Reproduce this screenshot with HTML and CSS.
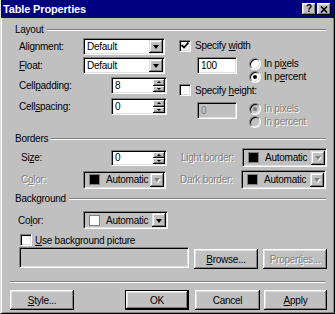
FILE: index.html
```html
<!DOCTYPE html>
<html lang="en">
<head>
  <meta charset="UTF-8">
  <title>Table Properties</title>
  <link rel="stylesheet" href="styles.css">
</head>
<body>

  <div class="dialog">
    <div class="titlebar">
      <span class="title">Table Properties</span>
      <span class="cap-btn help">?</span>
      <span class="cap-btn close">
        <svg width="8" height="7" viewBox="0 0 8 7"><path d="M1 0.5L7 6.5M7 0.5L1 6.5" stroke="#000" stroke-width="1.6"/></svg>
      </span>
    </div>

    <div class="content">
      <!-- Layout -->
      <div class="group-head"><span>Layout</span><i class="etch"></i></div>
      <div class="layout">
        <div class="col-left">
          <div class="row r1">
            <label class="lbl w64">Ali<u>g</u>nment:</label>
            <div class="field select w82"><span class="val">Default</span><span class="drop"><i class="tri"></i></span></div>
          </div>
          <div class="row r2">
            <label class="lbl w64"><u>F</u>loat:</label>
            <div class="field select w82"><span class="val">Default</span><span class="drop"><i class="tri"></i></span></div>
          </div>
          <div class="row r3">
            <label class="lbl w92">Cell<u>p</u>adding:</label>
            <div class="field spin w56"><span class="val">8</span><span class="spin-btns"><span class="sb"><i class="up"></i></span><span class="sb"><i class="dn"></i></span></span></div>
          </div>
          <div class="row r4">
            <label class="lbl w92">Cell<u>s</u>pacing:</label>
            <div class="field spin w56"><span class="val">0</span><span class="spin-btns"><span class="sb"><i class="up"></i></span><span class="sb"><i class="dn"></i></span></span></div>
          </div>
        </div>

        <div class="col-right">
          <div class="cb-row first">
            <span class="check on"><svg width="8" height="7" viewBox="0 0 8 7"><path d="M0.5 3L3 5.5L7.5 0.5" fill="none" stroke="#000" stroke-width="1.8"/></svg></span>
            <span>Specify <u>w</u>idth</span>
          </div>
          <div class="size-block">
            <div class="field text w40"><span class="val">100</span></div>
            <div class="radios">
              <div class="radio-row"><span class="radio"></span><span>In pi<u>x</u>els</span></div>
              <div class="radio-row"><span class="radio on"></span><span>In p<u>e</u>rcent</span></div>
            </div>
          </div>
          <div class="cb-row second">
            <span class="check"></span>
            <span>Specify <u>h</u>eight:</span>
          </div>
          <div class="size-block lower">
            <div class="field text w40 disabled"><span class="val">0</span></div>
            <div class="radios">
              <div class="radio-row dim"><span class="radio on disabled"></span><span>In pixels</span></div>
              <div class="radio-row dim"><span class="radio disabled"></span><span>In percent</span></div>
            </div>
          </div>
        </div>
      </div>

      <!-- Borders -->
      <div class="group-head"><span>Borders</span><i class="etch"></i></div>
      <div class="brow b1">
        <div class="half">
          <label class="lbl w90">Si<u>z</u>e:</label>
          <div class="field spin w56 h16"><span class="val">0</span><span class="spin-btns"><span class="sb"><i class="up"></i></span><span class="sb"><i class="dn"></i></span></span></div>
        </div>
        <label class="lbl w61 dim">Light border:</label>
        <div class="field color w85 h19"><span class="swatch black"></span><span class="val">Automatic</span><span class="drop off"><i class="tri"></i></span></div>
      </div>
      <div class="brow b2">
        <div class="half">
          <label class="lbl w62 dim">C<u>o</u>lor:</label>
          <div class="field color w83 h18"><span class="swatch black"></span><span class="val">Automatic</span><span class="drop off"><i class="tri"></i></span></div>
        </div>
        <label class="lbl w61 dim">Dark border:</label>
        <div class="field color w85 h19"><span class="swatch black"></span><span class="val">Automatic</span><span class="drop off"><i class="tri"></i></span></div>
      </div>

      <!-- Background -->
      <div class="group-head bg-head"><span>Background</span><i class="etch"></i></div>
      <div class="bgrow">
        <label class="lbl w65">Co<u>l</u>or:</label>
        <div class="field color w85 h18"><span class="swatch white"></span><span class="val">Automatic</span><span class="drop"><i class="tri"></i></span></div>
      </div>
      <div class="cb-row pic">
        <span class="check"></span>
        <span><u>U</u>se background picture</span>
      </div>
      <div class="pic-row">
        <div class="field picfield"></div>
        <span class="btn"><u>B</u>rowse...</span>
        <span class="btn dim">Propert<u>i</u>es...</span>
      </div>

      <div class="separator"></div>

      <div class="buttons">
        <span class="btn style"><u>S</u>tyle...</span>
        <span class="btn ok">OK</span>
        <span class="btn cancel">Cancel</span>
        <span class="btn apply"><u>A</u>pply</span>
      </div>
    </div>
  </div>

</body>
</html>
```

FILE: styles.css
```css
* {
  box-sizing: border-box;
}

body {
  margin: 0;
  background-color: #C0C0C0;
  font-family: "Liberation Sans", Arial, sans-serif;
  font-size: 10px;
  letter-spacing: -0.25px;
  color: #000;
}

u {
  text-decoration: underline;
  text-underline-offset: 1px;
}

.dialog {
  width: 335px;
  height: 314px;
  background-color: #C0C0C0;
  border-left: 1px solid #DFDFDF;
  border-right: 1px solid #000;
  border-bottom: 1px solid #000;
  box-shadow: inset 1px 0 #FFF, inset -1px -1px #808080;
  overflow: hidden;
}

.titlebar {
  display: flex;
  align-items: center;
  height: 18px;
  margin: 0 -1px;
  padding: 0 4px 0 3px;
  background-color: #000080;
}

.title {
  color: #FFF;
  font-weight: bold;
  font-size: 11px;
  letter-spacing: -0.15px;
  flex: 1;
}

.cap-btn {
  display: flex;
  align-items: center;
  justify-content: center;
  width: 14px;
  height: 12px;
  background-color: #C0C0C0;
  box-shadow: inset -1px -1px #000, inset 1px 1px #FFF, inset -2px -2px #808080, inset 2px 2px #DFDFDF;
  font-weight: bold;
  font-size: 10px;
  line-height: 12px;
}

.cap-btn.help {
  margin-right: 1px;
}

.content {
  padding: 0 8px 0 14px;
}

/* group headers */
.group-head {
  display: flex;
  align-items: center;
  height: 12px;
  line-height: 12px;
  margin-top: 6px;
}

.group-head .etch {
  flex: 1;
  height: 2px;
  margin-left: 3px;
  border-top: 1px solid #808080;
  border-bottom: 1px solid #FFF;
}

/* layout group */
.layout {
  display: flex;
  height: 91px;
}

.col-left {
  width: 163px;
  padding-left: 4px;
}

.row {
  display: flex;
  align-items: center;
  height: 17px;
}

.r1, .r2 { margin-top: 2px; }
.r3 { margin-top: 3px; }
.r4 { margin-top: 4px; }

.lbl {
  flex: none;
  white-space: nowrap;
}

.w61 { width: 61px; }
.w62 { width: 62px; }
.w64 { width: 64px; }
.w65 { width: 65px; }
.w90 { width: 90px; }
.w92 { width: 92px; }
.w40 { width: 40px; }
.w56 { width: 56px; }
.w82 { width: 82px; }
.w83 { width: 83px; }
.w85 { width: 85px; }

/* sunken controls */
.field {
  display: flex;
  align-items: center;
  flex: none;
  height: 17px;
  padding: 0 1px 0 3px;
  background-color: #FFF;
  border: 1px solid;
  border-color: #808080 #FFF #FFF #808080;
  box-shadow: inset 1px 1px #000, inset -1px -1px #DFDFDF;
  white-space: nowrap;
}

.h16 { height: 16px; }
.h18 { height: 18px; }
.h19 { height: 19px; }

.field .val {
  flex: 1;
  min-width: 0;
  overflow: hidden;
}

.field.disabled {
  background-color: #C0C0C0;
  color: #808080;
}

.drop {
  display: flex;
  align-items: center;
  justify-content: center;
  flex: none;
  width: 14px;
  height: 13px;
  background-color: #C0C0C0;
  box-shadow: inset -1px -1px #000, inset 1px 1px #DFDFDF, inset -2px -2px #808080, inset 2px 2px #FFF;
}

.h18 .drop, .h19 .drop {
  height: 14px;
}

.tri {
  width: 0;
  height: 0;
  border-left: 3.5px solid transparent;
  border-right: 3.5px solid transparent;
  border-top: 4px solid #000;
  margin-top: 1px;
}

.drop.off .tri {
  border-top-color: #808080;
  filter: drop-shadow(1px 1px 0 #FFF);
}

.spin-btns {
  display: flex;
  flex-direction: column;
  flex: none;
  width: 12px;
  height: 13px;
}

.sb {
  display: flex;
  align-items: center;
  justify-content: center;
  flex: 1;
  background-color: #C0C0C0;
  box-shadow: inset -1px -1px #000, inset 1px 1px #FFF, inset -2px -2px #808080;
}

.sb .up {
  border-left: 2.5px solid transparent;
  border-right: 2.5px solid transparent;
  border-bottom: 2px solid #000;
}

.sb .dn {
  border-left: 2.5px solid transparent;
  border-right: 2.5px solid transparent;
  border-top: 2px solid #000;
}

.h16 .spin-btns {
  height: 12px;
}

.field.color {
  background-color: #C0C0C0;
  padding-left: 5px;
}

.swatch {
  flex: none;
  width: 11px;
  height: 11px;
  margin-right: 6px;
  border: 1px solid #808080;
}

.swatch.black { background-color: #000; }
.swatch.white { background-color: #FFF; }

/* right column */
.col-right {
  flex: 1;
  padding-left: 1px;
}

.cb-row {
  display: flex;
  align-items: center;
  white-space: nowrap;
}

.cb-row.first {
  height: 15px;
  margin-top: 2px;
}

.cb-row.second {
  height: 12px;
  margin-top: 1px;
}

.check {
  display: flex;
  align-items: center;
  justify-content: center;
  flex: none;
  width: 12px;
  height: 12px;
  margin-right: 4px;
  background-color: #FFF;
  border: 1px solid;
  border-color: #808080 #FFF #FFF #808080;
  box-shadow: inset 1px 1px #000, inset -1px -1px #DFDFDF;
}

.size-block {
  display: flex;
  margin-top: 4px;
  padding-left: 18px;
}

.size-block.lower {
  margin-top: 6px;
}

.radios {
  margin-left: 12px;
}

.radio-row {
  display: flex;
  align-items: center;
  height: 13px;
  white-space: nowrap;
}

.radio {
  position: relative;
  flex: none;
  width: 12px;
  height: 12px;
  margin-right: 3px;
  border-radius: 50%;
  background-color: #FFF;
  border: 1px solid;
  border-color: #808080 #FFF #FFF #808080;
  box-shadow: inset 1px 1px #000, inset -1px -1px #DFDFDF;
}

.radio.on::after {
  content: "";
  position: absolute;
  left: 3px;
  top: 3px;
  width: 4px;
  height: 4px;
  border-radius: 50%;
  background-color: #000;
}

.radio.disabled {
  background-color: #C0C0C0;
}

.radio.disabled::after {
  background-color: #808080;
}

.dim {
  color: #808080;
  text-shadow: 1px 1px 0 #FFF;
}

/* borders group */
.brow {
  display: flex;
  align-items: center;
  height: 19px;
  margin-top: 3px;
}

.half {
  display: flex;
  align-items: center;
  width: 153px;
  margin-right: 14px;
  padding-left: 6px;
}

/* background group */
.bg-head {
  margin-top: 4px;
}

.bgrow {
  display: flex;
  align-items: center;
  height: 18px;
  margin-top: 6px;
  padding-left: 3px;
}

.cb-row.pic {
  height: 14px;
  margin-top: 4px;
  padding-left: 5px;
}

.cb-row.pic .check {
  margin-right: 3px;
}

.pic-row {
  display: flex;
  align-items: flex-start;
  padding-left: 4px;
}

.picfield {
  width: 170px;
  height: 21px;
  background-color: #C0C0C0;
}

/* push buttons */
.btn {
  display: flex;
  align-items: center;
  justify-content: center;
  flex: none;
  width: 64px;
  height: 20px;
  background-color: #C0C0C0;
  box-shadow: inset -1px -1px #000, inset 1px 1px #FFF, inset -2px -2px #808080, inset 2px 2px #DFDFDF;
  white-space: nowrap;
}

.pic-row .btn {
  margin-top: 2px;
  margin-left: 5px;
}

.separator {
  height: 2px;
  margin: 12px 1px 0 -5px;
  border-top: 1px solid #808080;
  border-bottom: 1px solid #FFF;
}

.buttons {
  display: flex;
  margin: 7px -1px 0 -5px;
}

.btn.ok {
  margin-left: auto;
  border: 1px solid #000;
}

.btn.cancel {
  width: 65px;
  margin-left: 6px;
}

.btn.apply {
  width: 63px;
  margin-left: 4px;
}
```
